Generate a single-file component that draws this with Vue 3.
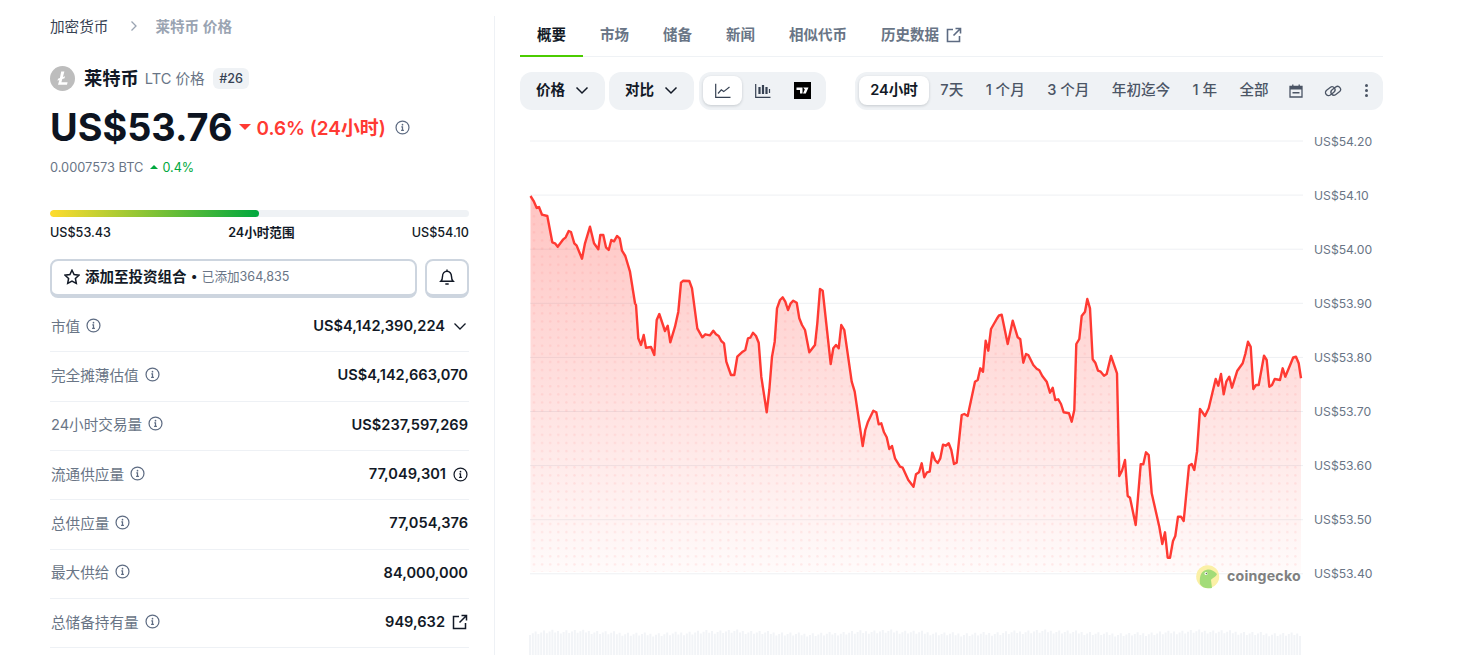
<template>
  <div class="page">
    <aside class="side">
      <nav class="crumbs">
        <span class="crumb-link">加密货币</span>
        <svg class="crumb-arrow" viewBox="0 0 10 12" width="10" height="12"><path d="M2.5 1.5 7 6l-4.5 4.5" /></svg>
        <span class="crumb-now">莱特币 价格</span>
      </nav>

      <div class="coin">
        <svg class="coin-logo" viewBox="0 0 25 25" width="25" height="25">
          <circle cx="12.5" cy="12.5" r="12.5" fill="#bdbdbd" />
          <path d="M11.2 5.6h3.2l-1.5 5.5 2.2-.8-.6 2-2.2.8-.9 3.2h6.2l-.6 2.4H8l1.3-4.7-1.8.7.5-1.9 1.9-.7z" fill="#fff" />
        </svg>
        <strong class="coin-name">莱特币</strong>
        <span class="coin-sub">LTC 价格</span>
        <span class="coin-rank">#26</span>
      </div>

      <div class="price-row">
        <span class="price">US$53.76</span>
        <i class="tri-down"></i>
        <span class="change">0.6% (24小时)</span>
        <svg class="info" viewBox="0 0 16 16"><circle cx="8" cy="8" r="6.9" /><path d="M6.7 7.3H8v3.6M6.5 11h3" /><circle class="dot" cx="8" cy="5" r=".9" /></svg>
      </div>

      <div class="btc-row">
        <span>0.0007573 BTC</span>
        <i class="tri-up"></i>
        <span class="up">0.4%</span>
      </div>

      <div class="range-bar"><div class="range-fill" :style="{ width: rangePct + '%' }"></div></div>
      <div class="range-labels">
        <span>US$53.43</span>
        <b>24小时范围</b>
        <span>US$54.10</span>
      </div>

      <div class="actions">
        <button class="btn-add">
          <svg class="star" viewBox="0 0 16 16" width="16" height="16"><path d="M8 1.2l2.1 4.4 4.8.6-3.500 3.300.9 4.800L8 12l-4.300 2.300.9-4.800L1.100 6.200l4.800-.6z" /></svg>
          <b>添加至投资组合</b>
          <span class="bullet">•</span>
          <span class="added">已添加364,835</span>
        </button>
        <button class="btn-bell">
          <svg viewBox="0 0 16 16" width="18" height="18"><path d="M2.500 11.800h11c-1-1-1.500-2-1.500-4.300 0-2.600-1.700-4.700-4-4.700S4 4.900 4 7.500c0 2.300-.5 3.300-1.500 4.300zM8 1.300v1.500M6.500 14.300h3" /></svg>
        </button>
      </div>

      <div class="stats">
        <div v-for="s in stats" :key="s.label" class="stat">
          <span class="stat-label">
            {{ s.label }}
            <svg class="info" viewBox="0 0 16 16"><circle cx="8" cy="8" r="6.9" /><path d="M6.7 7.3H8v3.6M6.5 11h3" /><circle class="dot" cx="8" cy="5" r=".9" /></svg>
          </span>
          <span class="stat-value">
            {{ s.value }}
            <svg v-if="s.after === 'chevron'" class="after chev" viewBox="0 0 16 16" width="16" height="16"><path d="M2.500 5.500 8 11l5.500-5.500" /></svg>
            <svg v-if="s.after === 'info'" class="info dark" viewBox="0 0 16 16"><circle cx="8" cy="8" r="6.9" /><path d="M6.7 7.3H8v3.6M6.5 11h3" /><circle class="dot" cx="8" cy="5" r=".9" /></svg>
            <svg v-if="s.after === 'link'" class="after ext" viewBox="0 0 16 16" width="16" height="16"><path d="M7 2.500H1.500v12h12V9M9.500 1.500h5v5M14.500 1.500 7.500 8.500" /></svg>
          </span>
        </div>
      </div>
    </aside>

    <main class="content">
      <div class="tabs">
        <span v-for="(t, i) in tabs" :key="t" class="tab" :class="{ active: i === 0 }">{{ t }}</span>
        <svg class="tab-ext" viewBox="0 0 16 16" width="16" height="16"><path d="M7 2.500H1.500v12h12V9M9.500 1.500h5v5M14.500 1.500 7.500 8.500" /></svg>
      </div>

      <div class="toolbar">
        <button class="drop">价格 <svg viewBox="0 0 16 16" width="16" height="16"><path d="M2.500 5.500 8 11l5.500-5.500" /></svg></button>
        <button class="drop">对比 <svg viewBox="0 0 16 16" width="16" height="16"><path d="M2.500 5.500 8 11l5.500-5.500" /></svg></button>
        <div class="group types">
          <button class="type on">
            <svg viewBox="0 0 16 16" width="16" height="16"><path d="M.7.7v13.600h14.800M3 10.500l3.300-3.700 2.400 1.800L14.500 4" /></svg>
          </button>
          <button class="type">
            <svg viewBox="0 0 16 16" width="16" height="16"><path d="M.7 1v13.300h14.800" /><path class="thick" d="M4.500 4v7M8 2v9M11.500 4v7" /><path d="M14.500 6v4" /></svg>
          </button>
          <button class="type">
            <svg viewBox="0 0 17 17" width="17" height="17"><rect width="17" height="17" fill="#000" stroke="none" /><path d="M2.500 5.500h6v6H6V8H2.500zM9.200 5.500h5.300l-2.700 6H9l1.800-4z" fill="#fff" stroke="none" /></svg>
          </button>
        </div>
        <div class="group ranges">
          <button v-for="(r, i) in ranges" :key="r" class="range" :class="{ on: i === 0 }">{{ r }}</button>
          <button class="tool cal">
            <svg viewBox="0 0 14 14" width="14" height="14"><path d="M1 2.500h12v10.500H1zM3.800.5v2M10.200.5v2" /><path class="fill" d="M1 2.500h12v3H1zM3.500 8h7v1.500h-7z" /></svg>
          </button>
          <button class="tool link">
            <svg viewBox="0 0 18 14" width="18" height="14">
              <rect x="1" y="4.200" width="10.500" height="6" rx="3" transform="rotate(-38 6.200 7.200)" />
              <rect x="6.500" y="3.800" width="10.500" height="6" rx="3" transform="rotate(-38 11.800 6.800)" />
            </svg>
          </button>
          <button class="tool kebab"><i></i><i></i><i></i></button>
        </div>
      </div>

      <svg class="chart" viewBox="520 120 863 535" width="863" height="535">
        <defs>
          <linearGradient id="areaFade" x1="0" y1="196" x2="0" y2="574" gradientUnits="userSpaceOnUse">
            <stop offset="0" stop-color="#ff3a33" stop-opacity=".3" />
            <stop offset="1" stop-color="#ff3a33" stop-opacity=".02" />
          </linearGradient>
          <pattern id="dots" x="530" y="196" width="8.100" height="8.100" patternUnits="userSpaceOnUse">
            <circle cx="4" cy="4" r="1.200" fill="#ff3a33" fill-opacity=".09" />
          </pattern>
        </defs>
        <line v-for="g in grid" :key="g.y" x1="530" x2="1303" :y1="g.y" :y2="g.y" class="gridline" />
        <path :d="areaPath" fill="url(#areaFade)" />
        <path :d="areaPath" fill="url(#dots)" />
        <path :d="linePath" class="price-line" />
        <text v-for="g in grid" :key="g.label" x="1314" :y="g.y + 4.500" class="axis">{{ g.label }}</text>
        <path :d="volumePath" class="volume" />
        <circle cx="1207.700" cy="576.700" r="11.500" fill="#fbf0a6" />
        <path d="M1200 584c-1-9 2-14 8-14.500 4 0 6 1.500 9 4.500-1 3-5 4-6 6l1 8c-6 1-10-.5-12-4z" fill="#a3dc78" />
        <circle cx="1206" cy="573.500" r="1.500" fill="#fff" />
        <circle cx="1206.400" cy="573.500" r=".8" fill="#666" />
        <text x="1227" y="581" class="gecko">coingecko</text>
      </svg>
    </main>
  </div>
</template>

<script setup>
const rangePct = 49.9

const stats = [
  { label: '市值', value: 'US$4,142,390,224', after: 'chevron' },
  { label: '完全摊薄估值', value: 'US$4,142,663,070' },
  { label: '24小时交易量', value: 'US$237,597,269' },
  { label: '流通供应量', value: '77,049,301', after: 'info' },
  { label: '总供应量', value: '77,054,376' },
  { label: '最大供给', value: '84,000,000' },
  { label: '总储备持有量', value: '949,632', after: 'link' },
]

const tabs = ['概要', '市场', '储备', '新闻', '相似代币', '历史数据']
const ranges = ['24小时', '7天', '1 个月', '3 个月', '年初迄今', '1 年', '全部']

const grid = ['54.20', '54.10', '54.00', '53.90', '53.80', '53.70', '53.60', '53.50', '53.40'].map((v, i) => ({
  label: 'US$' + v,
  y: 141 + i * 54.1,
}))

// price line, read off the reference in page pixels
const pts = [
  [530.5,196],[534,201.7],[536.7,208],[539,207],[542,214.7],[547.3,216],[552.3,242.3],[555,243.3],[557.7,246.7],[563.3,239.3],
  [565.7,237.3],[568.7,231],[571,232],[574.3,243.3],[576.7,245.7],[582,258.7],[585,243.3],[590,226.7],[594,243.3],[598.3,249.3],
  [600.3,235],[603.3,235],[606,247.3],[608.7,250],[611.3,240],[614,241.3],[617,236],[619.7,238.3],[622,250.7],[625.3,256],
  [630,271.7],[635,303.3],[636,305],[638.3,338.3],[641,345],[643.7,335],[646,347.7],[651,347],[654.3,355],[656.7,320],
  [659.3,314],[665,331],[667.7,325.7],[670.3,342.3],[675,326.7],[678.3,311.7],[681,282.7],[683.3,280.7],[689.3,281],[692,288.3],
  [697.3,328.3],[702.3,337.3],[705.3,334.3],[710,335.3],[713.3,330.7],[716,334.3],[718.7,336],[721.3,341],[724,343.3],[726.3,361.7],
  [731,375],[734.3,375],[737.3,356.7],[742.7,351.7],[745.3,350],[748,338.3],[750.3,337.7],[753,332.7],[756,336],[758.7,342.7],
  [761.3,376.7],[766.7,412.3],[769.3,390],[772,356.7],[774.7,341.7],[777,308.3],[780,300],[782.7,297.3],[785.3,301.7],[788,310],
  [790.7,303.3],[793.3,300.7],[796.7,302.7],[799.3,318.3],[802,325],[805,330],[809.3,352.3],[815,345],[817.3,323.3],[820,289],
  [822.7,290.7],[830.7,364],[833.3,348.3],[836,345],[838.7,348.3],[841.3,325],[844.3,330],[851.7,381.7],[854.7,391.7],[862.7,446],
  [865.3,430],[868,421.7],[873.3,410.7],[876.3,412.3],[878.7,424.3],[881.3,423.3],[884,432.3],[886.7,437.3],[889.3,449],[892,446],
  [895,458.3],[900,466.7],[902.7,467.7],[908.3,480],[913.5,486.7],[916,474.3],[919,472.3],[921.7,463.3],[924.3,477.3],[927,472.3],
  [929.7,471.7],[932.3,452.7],[935,460],[937.7,463],[940.3,458.3],[943,444.7],[945.7,445.7],[948.7,443.3],[951.3,450],[954,464],
  [956.7,462.7],[961.7,415],[964.3,414],[967.7,416],[975,381.7],[977.7,380],[980.3,368.3],[983,371.7],[985.7,340.7],[988.3,350.7],
  [991,329],[996.7,319],[999,315.3],[1001.7,314.7],[1007.7,344],[1012.7,320.7],[1017.7,337.3],[1020.3,339.3],[1023.3,362.7],[1026,354],
  [1028.3,355],[1033.3,365],[1036.7,368.7],[1039.3,370.3],[1042.3,376],[1046.7,381.7],[1050,392.7],[1052.7,387.7],[1055.3,400],[1058.3,399.3],
  [1061,404],[1063.7,412.3],[1069,413.3],[1071.7,421.7],[1074.3,410],[1076.3,344],[1079.3,339],[1081.7,316],[1085,311.7],[1087.3,299],
  [1090,308.3],[1092.7,359.3],[1095.3,362.7],[1098,370.7],[1100.7,371.7],[1104,375.7],[1106.7,374],[1111,356],[1117,373.3],[1119.3,476],
  [1122,470.7],[1125,460],[1127.7,496],[1130,497.7],[1135.7,525],[1140.7,464.3],[1143.3,464.3],[1146,452.3],[1148.7,455],[1151.7,493.3],
  [1159.3,526.7],[1162.3,544],[1165,532.3],[1167.7,557.7],[1170,557.7],[1173,541],[1175.3,536],[1178,516.7],[1181,516.7],[1183.7,521],
  [1189,465.7],[1191.7,464],[1194.3,470],[1197,451.7],[1200,409],[1205,416],[1208.7,408.3],[1215.7,379],[1218.3,385.7],[1221,374],
  [1223.7,394.3],[1226.3,381.7],[1229.3,376.7],[1232,387.7],[1237.3,370.7],[1242.7,363.3],[1245.3,354],[1248,341.7],[1250.7,346.7],[1253.3,389],
  [1256,385],[1258.7,385],[1264,355.7],[1266.7,360],[1269.3,386.7],[1272,385],[1274.7,379],[1280,380],[1282.7,368.3],[1285.3,376.7],
  [1293.3,357.3],[1296,356.7],[1298.7,363.3],[1301,378.3],
]

const linePath = pts.map((p, i) => (i ? 'L' : 'M') + p[0] + ' ' + p[1]).join('')
const areaPath = linePath + 'L1301 572L530.5 572Z'

// faint volume bars under the chart
let volumePath = ''
for (let x = 530, i = 0; x < 1301; x += 2.8, i++) {
  const h = 20 + ((i * 37) % 11) * 0.4 + Math.sin(i / 9) * 1.5
  volumePath += `M${x.toFixed(1)} ${(655 - h).toFixed(1)}V655`
}
</script>

<style>
html, body {
  margin: 0;
  background: #fff;
}
</style>

<style scoped>
.page {
  display: flex;
  height: 655px;
  overflow: hidden;
  font-family: Inter, "Noto Sans CJK SC", sans-serif;
  color: #121926;
  background: #fff;
}

button {
  font-family: inherit;
  border: none;
  cursor: pointer;
  color: inherit;
  background: none;
  padding: 0;
}

.side {
  box-sizing: border-box;
  width: 445px;
  margin: 16px 0 0 50px;
  padding-right: 25px;
  border-right: 1px solid #eef1f5;
}

.crumbs {
  display: flex;
  align-items: center;
  height: 20px;
  padding-bottom: 2px;
  box-sizing: border-box;
  font-size: 14.6px;
}

.crumb-link {
  color: #364152;
}

.crumb-arrow {
  margin: 2px 16px 0 21px;
}

.crumb-arrow path {
  fill: none;
  stroke: #9aa4b2;
  stroke-width: 1.3;
}

.crumb-now {
  color: #9aa4b2;
  font-weight: 600;
}

.coin {
  display: flex;
  align-items: center;
  height: 24px;
  margin-top: 30px;
}

.coin-name,
.coin-sub {
  margin-bottom: 2px;
}

.coin-name {
  margin-left: 9px;
  font-size: 18.3px;
  font-weight: 700;
  color: #121926;
}

.coin-sub {
  margin-left: 6px;
  font-size: 14.6px;
  color: #697586;
}

.coin-rank {
  margin-left: 8px;
  padding: 0 6.5px;
  height: 21px;
  line-height: 21px;
  font-size: 12.6px;
  font-weight: 500;
  border-radius: 6px;
  background: #eff2f5;
  color: #364152;
}

.price-row {
  display: flex;
  align-items: center;
  height: 44px;
  margin-top: 15px;
}

.price {
  font-size: 37.8px;
  font-weight: 700;
  color: #0d1421;
}

.tri-down {
  width: 0;
  height: 0;
  margin: 0 6px 0 6px;
  border-left: 6px solid transparent;
  border-right: 6px solid transparent;
  border-top: 6px solid #ff3a33;
}

.change {
  margin-bottom: 2px;
  font-size: 18.9px;
  font-weight: 600;
  color: #ff3a33;
}

.info {
  width: 15px;
  height: 15px;
  flex: none;
  fill: none;
  stroke: #5d6b82;
  stroke-width: 1.3;
}

.info .dot {
  fill: #5d6b82;
  stroke: none;
}

.price-row .info {
  margin-left: 9px;
}

.info.dark {
  stroke: #121926;
}

.info.dark .dot {
  fill: #121926;
}

.btc-row {
  display: flex;
  align-items: center;
  height: 20px;
  margin-top: 8px;
  font-size: 12.8px;
  color: #697586;
}

.tri-up {
  width: 0;
  height: 0;
  margin: 0 4px 1px 7px;
  border-left: 4px solid transparent;
  border-right: 4px solid transparent;
  border-bottom: 4px solid #00a83e;
}

.up {
  font-size: 12.6px;
  color: #00a83e;
}

.range-bar {
  height: 7px;
  margin-top: 33px;
  border-radius: 4px;
  background: #eff2f5;
  overflow: hidden;
}

.range-fill {
  height: 100%;
  border-radius: 4px;
  background: linear-gradient(90deg, #ffdc2e, #00a83e);
}

.range-labels {
  display: flex;
  justify-content: space-between;
  height: 16px;
  line-height: 16px;
  margin-top: 8px;
  font-size: 12.6px;
  font-weight: 500;
}

.range-labels b {
  font-weight: 600;
}

.actions {
  display: flex;
  gap: 8px;
  margin-top: 18px;
}

.btn-add,
.btn-bell {
  box-sizing: border-box;
  height: 39px;
  border: 2px solid #cdd5df;
  border-bottom-width: 4px;
  border-radius: 8px;
  background: #fff;
  display: flex;
  align-items: center;
}

.btn-add {
  flex: 1;
  padding: 0 0 4px 12px;
  font-size: 13px;
}

.star {
  fill: none;
  stroke: #121926;
  stroke-width: 1.5;
  margin: 3px 5px 0 0;
}

.btn-add b {
  font-weight: 700;
  font-size: 14.5px;
}

.bullet {
  margin: 0 4px;
}

.added {
  font-size: 12.6px;
  color: #697586;
}

.btn-bell {
  width: 44px;
  justify-content: center;
  padding-bottom: 2px;
}

.btn-bell svg {
  fill: none;
  stroke: #121926;
  stroke-width: 1.3;
}

.stats {
  margin-top: 5px;
}

.stat {
  box-sizing: border-box;
  display: flex;
  align-items: center;
  justify-content: space-between;
  height: 49.33px;
  padding-bottom: 4px;
  border-bottom: 1px solid #eef1f5;
  font-size: 14.6px;
}

.stat-label {
  display: flex;
  align-items: center;
  gap: 6px;
  margin-left: 1px;
  color: #697586;
}

.stat-value {
  display: flex;
  align-items: center;
  gap: 7px;
  margin: 2px 1px 0 0;
  font-weight: 600;
}

.after {
  fill: none;
  stroke: #121926;
  stroke-width: 1.3;
}

.ext {
  stroke-width: 1.5;
}

.tabs {
  display: flex;
  align-items: flex-start;
  height: 40px;
  margin-top: 16px;
  border-bottom: 1px solid #eff2f5;
}

.tab {
  position: relative;
  padding: 0 17px;
  line-height: 38px;
  font-size: 14.5px;
  font-weight: 600;
  color: #697586;
}

.tab.active {
  color: #121926;
}

.tab.active::after {
  content: "";
  position: absolute;
  left: 0;
  right: 0;
  bottom: -3px;
  height: 2px;
  background: #4bcc00;
}

.tab-ext {
  margin: 11px 0 0 -10px;
  fill: none;
  stroke: #5d6b82;
  stroke-width: 1.6;
}

.content {
  width: 863px;
  margin-left: 25px;
}

.toolbar {
  display: flex;
  gap: 4px;
  margin-top: 15px;
}

.drop {
  box-sizing: border-box;
  display: flex;
  align-items: center;
  justify-content: center;
  gap: 9px;
  width: 85px;
  height: 38px;
  padding: 0 0 5px 1px;
  border-radius: 12px;
  background: #eff2f5;
  font-size: 14.6px;
  font-weight: 600;
}

.drop svg {
  fill: none;
  stroke: #121926;
  stroke-width: 1.5;
  margin-top: 3px;
}

.group {
  display: flex;
  align-items: flex-start;
  height: 38px;
  box-sizing: border-box;
  padding: 4px 4px 0;
  border-radius: 12px;
  background: #eff2f5;
}

.types {
  gap: 1px;
  margin-left: 1px;
}

.type {
  display: flex;
  align-items: center;
  justify-content: center;
  width: 39px;
  height: 29px;
  border-radius: 8px;
}

.type svg {
  fill: none;
  stroke: #364152;
  stroke-width: 1.2;
}

.type .thick {
  stroke-width: 2.2;
}

.on {
  background: #fff;
  box-shadow: 0 1px 3px rgba(13, 20, 33, .18);
}

.ranges {
  margin-left: auto;
  width: 528px;
}

.range {
  box-sizing: border-box;
  height: 29px;
  padding: 0 11.2px 5px;
  font-size: 14.6px;
  font-weight: 500;
  color: #4b5565;
  border-radius: 8px;
  white-space: nowrap;
}

.range.on {
  font-weight: 600;
  color: #121926;
}

.tool {
  display: flex;
  align-items: center;
  justify-content: center;
  height: 29px;
}

.tool svg {
  fill: none;
  stroke: #4b5565;
  stroke-width: 1.3;
}

.tool .fill {
  fill: #4b5565;
  stroke: none;
}

.cal {
  margin-left: 9px;
}

.link {
  margin-left: 21px;
}

.kebab {
  flex-direction: column;
  gap: 2px;
  width: 4px;
  margin-left: 23px;
}

.kebab i {
  width: 3px;
  height: 3px;
  border-radius: 50%;
  background: #4b5565;
}

.chart {
  display: block;
  margin-top: 10px;
}

.gridline {
  stroke: #eef0f3;
  stroke-width: 1;
}

.price-line {
  fill: none;
  stroke: #ff3a33;
  stroke-width: 2.4;
  stroke-linejoin: round;
}

.axis {
  font-size: 12.2px;
  fill: #697586;
}

.volume {
  stroke: #f2f4f7;
  stroke-width: 2;
  fill: none;
}

.gecko {
  font-size: 14.2px;
  font-weight: 700;
  fill: #808080;
  letter-spacing: .2px;
}
</style>
